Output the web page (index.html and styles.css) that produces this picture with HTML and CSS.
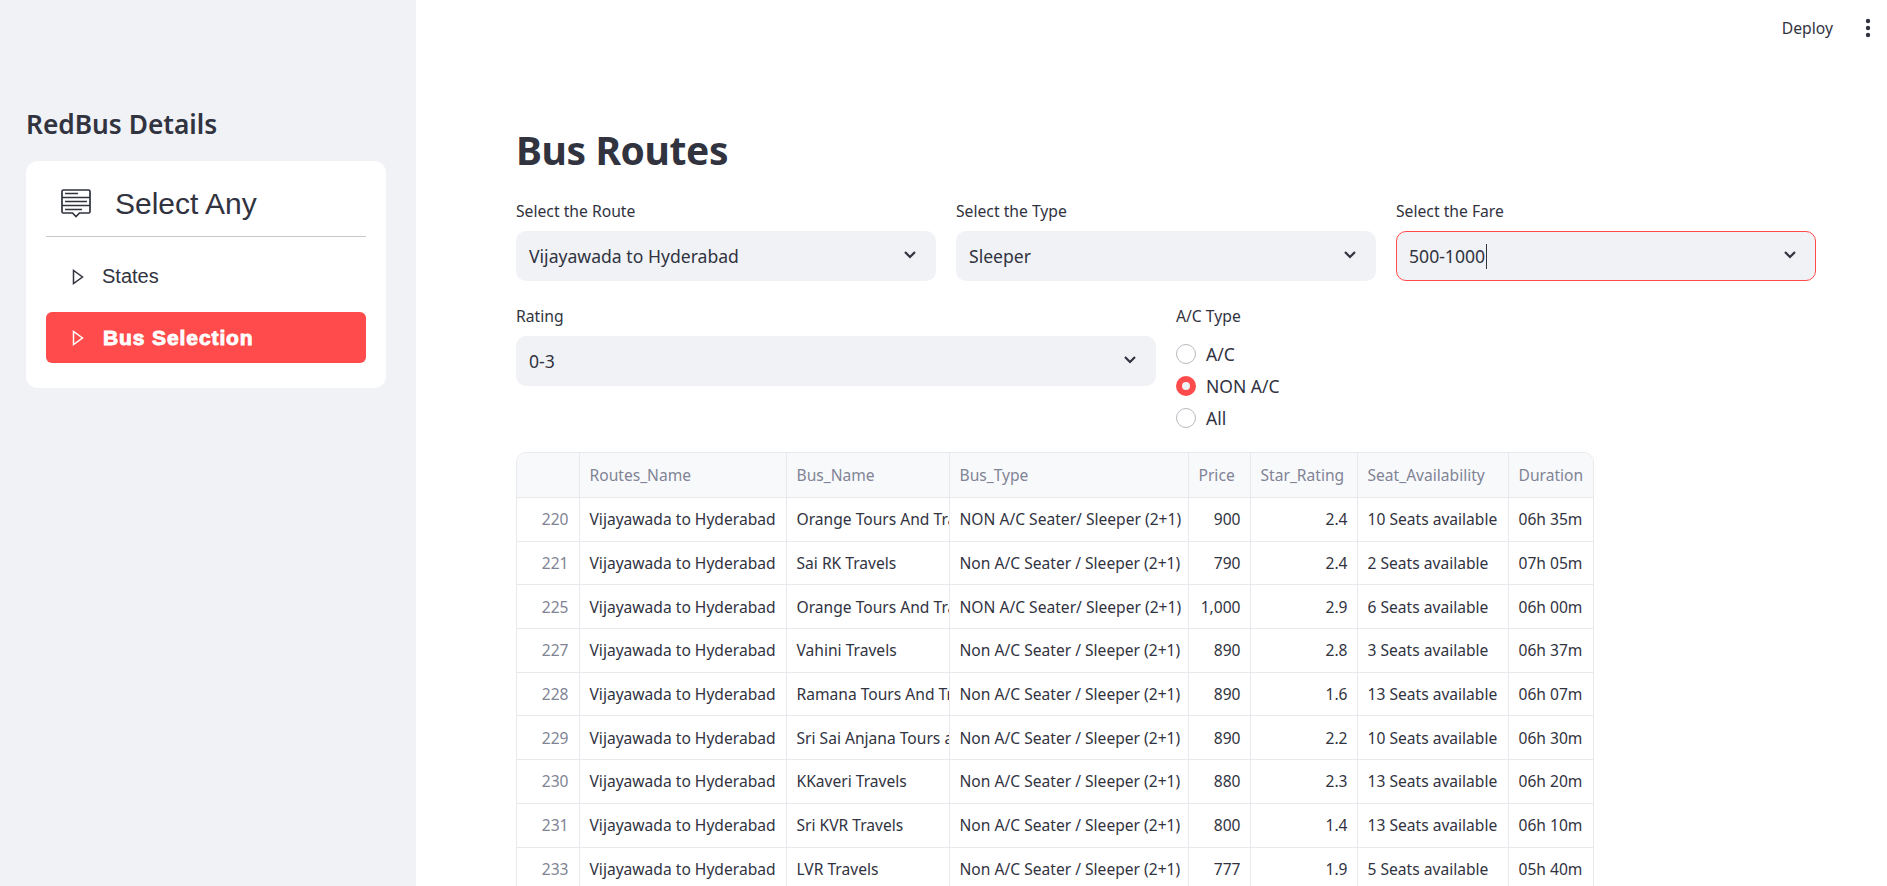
FILE: index.html
```html
<!DOCTYPE html>
<html lang="en">
<head>
    <meta charset="UTF-8">
    <title>Bus Routes</title>
    <link rel="stylesheet" href="styles.css">
</head>
<body>
<div class="app">
    <aside class="sidebar">
        <h3 class="side-title">RedBus Details</h3>
        <div class="menu-card">
            <div class="menu-head">
                <svg class="menu-icon" viewBox="0 0 30 29" fill="none" stroke="#31333f" stroke-width="1.700">
                    <path d="M2.500 1h25a1.500 1.500 0 0 1 1.500 1.500v20a1.500 1.500 0 0 1-1.500 1.500h-9l-3.500 3.500-3.500-3.500h-9a1.500 1.500 0 0 1-1.500-1.500v-20a1.500 1.500 0 0 1 1.500-1.500z"/>
                    <path d="M1 8.500h28M1 16.500h28M4 4.500h13M4 12.500h22M4 20.500h17"/>
                </svg>
                <span class="menu-title">Select Any</span>
            </div>
            <hr class="menu-rule">
            <div class="menu-item">
                <svg class="caret" viewBox="0 0 12 16" fill="none" stroke="#31333f" stroke-width="1.500"><path d="M1.500 1.500v13l9-6.500z"/></svg>
                <span>States</span>
            </div>
            <div class="menu-item active">
                <svg class="caret" viewBox="0 0 12 16" fill="none" stroke="#fff" stroke-width="1.500"><path d="M1.500 1.500v13l9-6.500z"/></svg>
                <span>Bus Selection</span>
            </div>
        </div>
    </aside>
    <main class="main">
        <header class="topbar">
            <span class="deploy">Deploy</span>
            <svg class="kebab" viewBox="0 0 6 20" fill="#31333f"><circle cx="3" cy="3" r="2.200"/><circle cx="3" cy="10" r="2.200"/><circle cx="3" cy="17" r="2.200"/></svg>
        </header>
        <h1 class="page-title">Bus Routes</h1>
        <div class="row three">
            <div class="field">
                <label>Select the Route</label>
                <div class="select"><span>Vijayawada to Hyderabad</span><svg class="chev" viewBox="0 0 14 10" fill="none" stroke="#31333f" stroke-width="2.200"><path d="M2 2l5 5 5-5"/></svg></div>
            </div>
            <div class="field">
                <label>Select the Type</label>
                <div class="select"><span>Sleeper</span><svg class="chev" viewBox="0 0 14 10" fill="none" stroke="#31333f" stroke-width="2.200"><path d="M2 2l5 5 5-5"/></svg></div>
            </div>
            <div class="field">
                <label>Select the Fare</label>
                <div class="select focus"><span class="typed">500-1000</span><svg class="chev" viewBox="0 0 14 10" fill="none" stroke="#31333f" stroke-width="2.200"><path d="M2 2l5 5 5-5"/></svg></div>
            </div>
        </div>
        <div class="row two">
            <div class="field">
                <label>Rating</label>
                <div class="select"><span>0-3</span><svg class="chev" viewBox="0 0 14 10" fill="none" stroke="#31333f" stroke-width="2.200"><path d="M2 2l5 5 5-5"/></svg></div>
            </div>
            <div class="field">
                <label>A/C Type</label>
                <div class="radios">
                    <div class="radio"><i class="dot"></i>A/C</div>
                    <div class="radio"><i class="dot on"></i>NON A/C</div>
                    <div class="radio"><i class="dot"></i>All</div>
                </div>
            </div>
        </div>
        <div class="table-wrap">
            <table class="grid">
                <colgroup>
                    <col class="c-idx"><col class="c-route"><col class="c-bus"><col class="c-type"><col class="c-price"><col class="c-star"><col class="c-seat"><col class="c-dur">
                </colgroup>
                <thead>
                    <tr><th></th><th>Routes_Name</th><th>Bus_Name</th><th>Bus_Type</th><th>Price</th><th>Star_Rating</th><th>Seat_Availability</th><th>Duration</th></tr>
                </thead>
                <tbody>
                    <tr><td class="idx">220</td><td>Vijayawada to Hyderabad</td><td>Orange Tours And Travels</td><td>NON A/C Seater/ Sleeper (2+1)</td><td class="num">900</td><td class="num">2.4</td><td>10 Seats available</td><td>06h 35m</td></tr>
                    <tr><td class="idx">221</td><td>Vijayawada to Hyderabad</td><td>Sai RK Travels</td><td>Non A/C Seater / Sleeper (2+1)</td><td class="num">790</td><td class="num">2.4</td><td>2 Seats available</td><td>07h 05m</td></tr>
                    <tr><td class="idx">225</td><td>Vijayawada to Hyderabad</td><td>Orange Tours And Travels</td><td>NON A/C Seater/ Sleeper (2+1)</td><td class="num">1,000</td><td class="num">2.9</td><td>6 Seats available</td><td>06h 00m</td></tr>
                    <tr><td class="idx">227</td><td>Vijayawada to Hyderabad</td><td>Vahini Travels</td><td>Non A/C Seater / Sleeper (2+1)</td><td class="num">890</td><td class="num">2.8</td><td>3 Seats available</td><td>06h 37m</td></tr>
                    <tr><td class="idx">228</td><td>Vijayawada to Hyderabad</td><td>Ramana Tours And Travels</td><td>Non A/C Seater / Sleeper (2+1)</td><td class="num">890</td><td class="num">1.6</td><td>13 Seats available</td><td>06h 07m</td></tr>
                    <tr><td class="idx">229</td><td>Vijayawada to Hyderabad</td><td>Sri Sai Anjana Tours and Travels</td><td>Non A/C Seater / Sleeper (2+1)</td><td class="num">890</td><td class="num">2.2</td><td>10 Seats available</td><td>06h 30m</td></tr>
                    <tr><td class="idx">230</td><td>Vijayawada to Hyderabad</td><td>KKaveri Travels</td><td>Non A/C Seater / Sleeper (2+1)</td><td class="num">880</td><td class="num">2.3</td><td>13 Seats available</td><td>06h 20m</td></tr>
                    <tr><td class="idx">231</td><td>Vijayawada to Hyderabad</td><td>Sri KVR Travels</td><td>Non A/C Seater / Sleeper (2+1)</td><td class="num">800</td><td class="num">1.4</td><td>13 Seats available</td><td>06h 10m</td></tr>
                    <tr><td class="idx">233</td><td>Vijayawada to Hyderabad</td><td>LVR Travels</td><td>Non A/C Seater / Sleeper (2+1)</td><td class="num">777</td><td class="num">1.9</td><td>5 Seats available</td><td>05h 40m</td></tr>
                </tbody>
            </table>
        </div>
    </main>
</div>
</body>
</html>
```
FILE: styles.css
```css
* {
    box-sizing: border-box;
}
html, body {
    margin: 0;
    height: 100%;
    overflow: hidden;
}
body {
    font-family: "Noto Sans", sans-serif;
    color: #31333f;
    background: #fff;
}
.app {
    display: flex;
    height: 886px;
}

/* sidebar */
.sidebar {
    width: 416px;
    flex: none;
    background: #f0f2f6;
    padding: 107px 30px 0 26px;
}
.side-title {
    margin: 0 0 19px;
    padding-left: 0;
    font-size: 26.300px;
    line-height: 35px;
    font-weight: 600;
}
.menu-card {
    height: 227px;
    background: #fff;
    border-radius: 12px;
    padding: 20px;
    font-family: "Liberation Sans", Arial, sans-serif;
}
.menu-head {
    display: flex;
    align-items: center;
    height: 45px;
    margin-bottom: 10px;
    padding-left: 15px;
}
.menu-icon {
    width: 30px;
    height: 29px;
    margin-right: 24px;
}
.menu-title {
    font-size: 30px;
}
.menu-rule {
    margin: 0 0 14px;
    border: 0;
    border-top: 1px solid #c9c9cc;
}
.menu-item {
    display: flex;
    align-items: center;
    height: 51px;
    padding-left: 26px;
    font-size: 20px;
    border-radius: 6px;
}
.menu-item + .menu-item {
    margin-top: 10px;
}
.caret {
    width: 12px;
    height: 16px;
    margin-right: 18px;
}
.menu-item.active {
    background: #ff4b4b;
    color: #fff;
    font-size: 21px;
    font-weight: 700;
    letter-spacing: 0.900px;
    -webkit-text-stroke: 0.900px #fff;
}
.menu-item.active span {
    margin-left: 1px;
}

/* main area */
.main {
    flex: 1;
    min-width: 0;
    padding: 0 71px 0 100px;
    position: relative;
}
.topbar {
    display: flex;
    justify-content: flex-end;
    align-items: center;
    height: 55px;
    margin-right: -71px;
    padding-right: 16px;
    font-size: 15.700px;
}
.deploy {
    margin-right: 32px;
}
.kebab {
    width: 6px;
    height: 20px;
}
.page-title {
    margin: 67px 0 0;
    font-size: 39px;
    line-height: 56px;
    font-weight: 700;
    letter-spacing: -0.400px;
}
.row {
    display: grid;
    gap: 20px;
}
.three {
    grid-template-columns: repeat(3, 1fr);
    margin-top: 22px;
}
.two {
    grid-template-columns: repeat(2, 1fr);
    margin-top: 24px;
}
.field label {
    display: block;
    height: 31px;
    font-size: 15.700px;
    line-height: 22px;
}
.select {
    display: flex;
    justify-content: space-between;
    align-items: center;
    height: 50px;
    padding: 0 19px 0 13px;
    background: #f0f2f6;
    border-radius: 10px;
    font-size: 17.600px;
}
.select.focus {
    border: 1px solid #ff4b4b;
    padding: 0 18px 0 12px;
}
.typed {
    border-right: 1px solid #31333f;
    padding-right: 1px;
    line-height: 25px;
}
.chev {
    width: 14px;
    height: 10px;
    margin-top: -3px;
}
.radios {
    margin-top: 2px;
}
.radio {
    display: flex;
    align-items: center;
    height: 32px;
    font-size: 17.500px;
}
.dot {
    width: 20px;
    height: 20px;
    margin-right: 10px;
    border-radius: 50%;
    border: 1px solid #b9bac0;
    background: #fff;
}
.dot.on {
    border: 6px solid #ff4b4b;
    background: #f0f2f6;
}

/* data table */
.table-wrap {
    position: absolute;
    left: 100px;
    top: 452px;
    width: 1078px;
    border: 1px solid #e8e9ed;
    border-radius: 10px 10px 0 0;
    overflow: hidden;
}
.grid {
    table-layout: fixed;
    width: 100%;
    border-collapse: collapse;
    font-size: 15.600px;
}
.c-idx { width: 62px; }
.c-route { width: 207px; }
.c-bus { width: 163px; }
.c-type { width: 239px; }
.c-price { width: 62px; }
.c-star { width: 107px; }
.c-seat { width: 151px; }
.grid th, .grid td {
    height: 43.700px;
    padding: 0 9px 0 10px;
    border: 1px solid #e8e9ed;
    white-space: nowrap;
    overflow: hidden;
    text-align: left;
    font-weight: 400;
}
.grid tr > :first-child {
    border-left: 0;
}
.grid tr > :last-child {
    border-right: 0;
}
.grid thead tr > * {
    border-top: 0;
    height: 44.500px;
}
.grid th {
    background: #f8f9fb;
    color: #808495;
}
.grid td.num, .grid td.idx {
    text-align: right;
}
.grid td.idx {
    color: #808495;
    padding-right: 10px;
}
```
